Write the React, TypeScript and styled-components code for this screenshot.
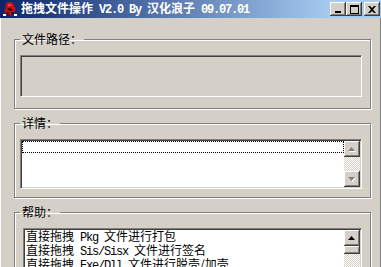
import React from "react";
import styled, { createGlobalStyle } from "styled-components";

const cjk = `"Noto Sans CJK SC", "Noto Sans", sans-serif`;
const mono = `"Liberation Mono", "Noto Sans CJK SC", monospace`;

const GlobalStyle = createGlobalStyle`
  html, body {
    margin: 0;
    padding: 0;
    background: #d4d0c8;
    overflow: hidden;
  }
`;

const Window = styled.div`
  width: 381px;
  height: 267px;
  box-sizing: border-box;
  background: #d4d0c8;
  display: flex;
  flex-direction: column;
  overflow: hidden;
`;

const TitleBar = styled.div`
  height: 18px;
  flex: none;
  display: flex;
  align-items: center;
  padding: 0 1px 0 2px;
  background: linear-gradient(to right, #0a246a 0, #a6caf0 330px);
  color: #fff;
  font: bold 12px/14px ${cjk};
  white-space: nowrap;
`;

const TitleText = styled.span`
  margin-left: 3px;
`;

const Latin = styled.span`
  font-family: ${mono};
  letter-spacing: -1.2px;
  white-space: pre;
`;

const CaptionButtons = styled.div`
  margin-left: auto;
  display: flex;
  align-items: center;
`;

const CapBtn = styled.div<{ $gap?: number }>`
  width: 16px;
  height: 14px;
  margin-left: ${p => p.$gap ?? 0}px;
  background: #d4d0c8;
  box-shadow: inset -1px -1px #404040, inset 1px 1px #fff, inset -2px -2px #808080;
  display: flex;
  align-items: center;
  justify-content: center;
`;

const Body = styled.div`
  flex: 1;
  display: flex;
  flex-direction: column;
  gap: 7px;
  padding: 14px 10px 0 14px;
  box-shadow: inset 1px 0 #fff, inset -1px 0 #808080;
`;

const Group = styled.fieldset<{ $pb: number }>`
  margin: 0;
  padding: 9px 8px ${p => p.$pb}px 5px;
  min-width: 0;
  border: 1px solid #808080;
  box-shadow: inset 1px 1px #fff, 1px 1px #fff;
`;

const Caption = styled.legend`
  padding: 0 2px;
  font: 12px/14px ${cjk};
  color: #000;
`;

const Well = styled.div<{ $h: number; $white?: boolean; $inset?: number }>`
  height: ${p => p.$h}px;
  margin-left: ${p => p.$inset ?? 0}px;
  box-sizing: border-box;
  border: 1px solid;
  border-color: #808080 #fff #fff #808080;
  box-shadow: inset 1px 1px #404040, inset -1px -1px #d4d0c8;
  padding: 1px;
  background: ${p => (p.$white ? "#fff" : "#d4d0c8")};
  display: flex;
  overflow: hidden;
`;

const Items = styled.div`
  flex: 1;
  min-width: 0;
  display: flex;
  flex-direction: column;
`;

const FocusRow = styled.div`
  height: 12px;
  border: 1px dotted #000;
  box-sizing: border-box;
`;

const HelpLine = styled.div`
  padding-left: 1px;
  font: 12px/12px ${cjk};
  color: #000;
  white-space: nowrap;
`;

const ScrollBar = styled.div`
  width: 16px;
  flex: none;
  display: flex;
  flex-direction: column;
`;

const ScrollBtn = styled.div<{ $h?: number }>`
  height: ${p => p.$h ?? 16}px;
  flex: none;
  background: #d4d0c8;
  box-shadow: inset -1px -1px #404040, inset 1px 1px #fff, inset -2px -2px #808080;
  display: flex;
  align-items: center;
  justify-content: center;
`;

const Track = styled.div`
  flex: 1;
  background-image: repeating-conic-gradient(#fff 0 25%, #d4d0c8 0 50%);
  background-size: 2px 2px;
`;

function AppIcon() {
  return (
    <svg width="16" height="16" viewBox="0 0 16 16">
      <path d="M8 1 C4 1 3 4 4 7 C2 8 2 11 4 12 L3 15 L7 13 L9 15 L11 12 C14 11 14 7 12 5 C12 2 10 1 8 1 Z" fill="#c81010" />
      <path d="M6 4 C7 3 10 3 10 5 C9 4 7 4 6 6 Z" fill="#ff6060" />
      <path d="M5 8 L8 7 L11 9 L8 10 Z" fill="#200000" />
      <path d="M4 12 L7 11 L6 14 Z M9 11 L12 11 L10 14 Z" fill="#101010" />
      <rect x="1" y="13" width="3" height="2" fill="#ffffff" />
      <rect x="12" y="13" width="3" height="2" fill="#ffffff" />
    </svg>
  );
}

function Glyph({ kind }: { kind: "min" | "max" | "close" }) {
  if (kind === "min")
    return (
      <svg width="8" height="7" viewBox="0 0 8 7">
        <rect x="1" y="5" width="6" height="2" fill="#000" />
      </svg>
    );
  if (kind === "max")
    return (
      <svg width="9" height="9" viewBox="0 0 9 9">
        <path d="M0 0 H9 V9 H0 Z M1 2 V8 H8 V2 Z" fill="#000" fillRule="evenodd" />
      </svg>
    );
  return (
    <svg width="8" height="7" viewBox="0 0 8 7">
      <path d="M0 0 H2 L4 2 L6 0 H8 L5 3.5 L8 7 H6 L4 5 L2 7 H0 L3 3.5 Z" fill="#000" />
    </svg>
  );
}

function Arrow({ up, disabled }: { up: boolean; disabled?: boolean }) {
  const d = up ? "M3.5 0 L7 4 H0 Z" : "M0 0 H7 L3.5 4 Z";
  return (
    <svg width="8" height="5" viewBox="0 0 8 5">
      {disabled && <path d={d} fill="#fff" transform="translate(1,1)" />}
      <path d={d} fill={disabled ? "#808080" : "#000"} />
    </svg>
  );
}

const helpLines = [
  ["直接拖拽", " Pkg ", "文件进行打包"],
  ["直接拖拽", " Sis/Sisx ", "文件进行签名"],
  ["直接拖拽", " Exe/Dll ", "文件进行脱壳/加壳"],
];

export default function App() {
  return (
    <Window>
      <GlobalStyle />
      <TitleBar>
        <AppIcon />
        <TitleText>
          拖拽文件操作<Latin> V2.0 By </Latin>汉化浪子<Latin> 09.07.01</Latin>
        </TitleText>
        <CaptionButtons>
          <CapBtn>
            <Glyph kind="min" />
          </CapBtn>
          <CapBtn>
            <Glyph kind="max" />
          </CapBtn>
          <CapBtn $gap={2}>
            <Glyph kind="close" />
          </CapBtn>
        </CaptionButtons>
      </TitleBar>
      <Body>
        <Group $pb={11}>
          <Caption>文件路径：</Caption>
          <Well $h={42} />
        </Group>
        <Group $pb={8}>
          <Caption>详情：</Caption>
          <Well $h={50} $white>
            <Items>
              <FocusRow />
            </Items>
            <ScrollBar>
              <ScrollBtn>
                <Arrow up disabled />
              </ScrollBtn>
              <Track />
              <ScrollBtn>
                <Arrow up={false} disabled />
              </ScrollBtn>
            </ScrollBar>
          </Well>
        </Group>
        <Group $pb={8}>
          <Caption>帮助：</Caption>
          <Well $h={70} $white $inset={3}>
            <Items>
              {helpLines.map(([a, b, c]) => (
                <HelpLine key={b}>
                  {a}
                  <Latin>{b}</Latin>
                  {c}
                </HelpLine>
              ))}
            </Items>
            <ScrollBar>
              <ScrollBtn>
                <Arrow up />
              </ScrollBtn>
              <ScrollBtn $h={8} />
              <Track />
            </ScrollBar>
          </Well>
        </Group>
      </Body>
    </Window>
  );
}
